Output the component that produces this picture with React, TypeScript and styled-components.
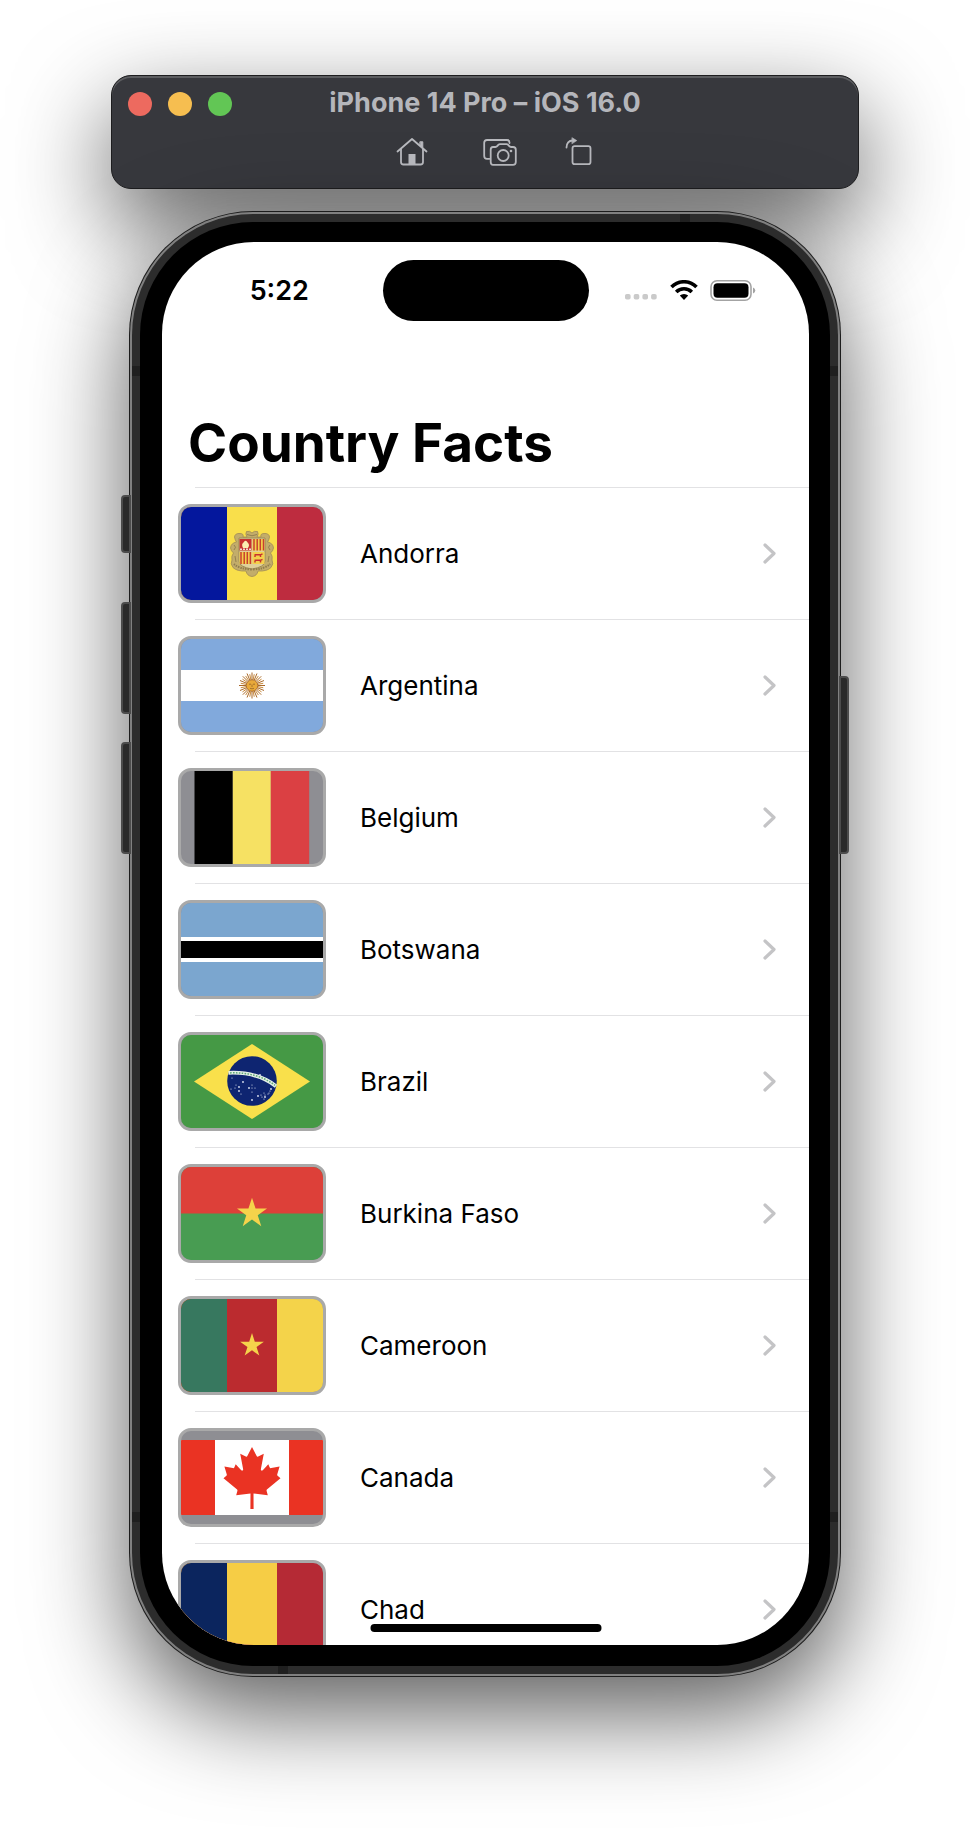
import React from "react";
import styled, { createGlobalStyle } from "styled-components";

const GlobalStyle = createGlobalStyle`
  * { box-sizing: border-box; }
  body {
    margin: 0;
    background: #fff;
    font-family: Inter, "Liberation Sans", sans-serif;
  }
`;

const windowShadow = "0 36px 96px rgba(0, 0, 0, 0.64)";

const Desktop = styled.main`
  max-width: 1000px;
  margin: 0 auto;
  padding: 75px 111px 151px;
  overflow: hidden;
`;

const Simulator = styled.div`
  max-width: 748px;
  margin: 0 auto;
  display: flex;
  flex-direction: column;
  gap: 22px;
`;

const TitleBar = styled.header`
  height: 114px;
  padding: 12px 16px 0;
  border: 1px solid #1d1d1f;
  border-radius: 20px;
  background: #37383d;
  box-shadow: inset 0 2px 0 #5c5d60, ${windowShadow};
`;

const TitleRow = styled.div`
  display: grid;
  grid-template-columns: 1fr auto 1fr;
  align-items: center;
  height: 32px;
`;

const Lights = styled.div`
  display: flex;
  gap: 16px;
`;

const Light = styled.button<{ $color: string }>`
  width: 24px;
  height: 24px;
  padding: 0;
  border: 0;
  border-radius: 50%;
  background: ${(p) => p.$color};
`;

const WindowTitle = styled.h1`
  margin: 0;
  padding-bottom: 2px;
  font-size: 27px;
  line-height: 30px;
  font-weight: 700;
  white-space: nowrap;
  color: #b5b6bb;
`;

const Toolbar = styled.nav`
  display: flex;
  justify-content: center;
  gap: 48px;
  margin-top: 17px;
  padding-left: 18px;
`;

const ToolButton = styled.button`
  display: flex;
  padding: 0;
  border: 0;
  background: none;
  color: #b9babf;
`;

const Phone = styled.section`
  position: relative;
  margin: 0 18px;
  padding: 1px;
  border-radius: 124px;
  background: #1c1c1c;
  box-shadow: ${windowShadow};
`;

const Rim = styled.div`
  padding: 2px;
  border-radius: 123px;
  background: #808080;
`;

const Band = styled.div`
  position: relative;
  padding: 8px;
  border-radius: 121px;
  background: #2c2c2c;
`;

const Bezel = styled.div`
  position: relative;
  padding: 20px 21px 21px 22px;
  border-radius: 113px;
  background: #000;
`;

const Screen = styled.div`
  position: relative;
  aspect-ratio: 647 / 1403;
  overflow: hidden;
  border-radius: 92px;
  background: #fff;
`;

const SideKey = styled.span<{ $side: "left" | "right"; $top: number; $height: number }>`
  position: absolute;
  ${(p) => p.$side}: -8px;
  top: ${(p) => p.$top}px;
  width: 10px;
  height: ${(p) => p.$height}px;
  border: 2px solid #4c4c4c;
  border-radius: ${(p) => (p.$side === "left" ? "4px 0 0 4px" : "0 4px 4px 0")};
  background: #2a2a2a;
`;

const AntennaAcross = styled.span<{ $edge: "top" | "bottom" }>`
  position: absolute;
  left: 0;
  right: 0;
  ${(p) => p.$edge}: 152px;
  height: 10px;
  background: #1f1f1f;
`;

const AntennaDown = styled.span<{ $edge: "top" | "bottom" }>`
  position: absolute;
  ${(p) => (p.$edge === "top" ? "top: 0; right: 148px;" : "bottom: 0; left: 146px;")}
  width: 10px;
  height: 8px;
  background: #1f1f1f;
`;

const StatusBar = styled.div`
  display: grid;
  grid-template-columns: 1fr 206px 1fr;
  align-items: center;
  padding-top: 18px;
`;

const Clock = styled.time`
  padding-left: 14px;
  text-align: center;
  font-size: 27px;
  line-height: 32px;
  font-weight: 600;
`;

const Island = styled.div`
  height: 61px;
  border-radius: 31px;
  background: #000;
`;

const StatusIcons = styled.div`
  display: flex;
  align-items: center;
  justify-content: flex-end;
  gap: 11px;
  padding-right: 53px;
`;

const ScreenTitle = styled.h2`
  margin: 90px 0 0 26px;
  font-size: 53px;
  line-height: 64px;
  font-weight: 700;
`;

const CountryList = styled.ul`
  margin: 12px 0 0;
  padding: 0;
  list-style: none;
`;

const CountryItem = styled.li`
  position: relative;
  height: 132px;

  &::before {
    content: "";
    position: absolute;
    top: 0;
    left: 33px;
    right: 0;
    height: 1px;
    background: #e2e2e4;
  }
`;

const CountryLink = styled.a`
  display: flex;
  align-items: center;
  height: 100%;
  padding: 0 33px 0 16px;
  color: #000;
  text-decoration: none;
`;

const FlagFrame = styled.span`
  display: block;
  flex: none;
  width: 148px;
  height: 99px;
  border: 3px solid #a9a9a9;
  border-radius: 13px;
  overflow: hidden;
  background: #8e8e93;

  svg {
    display: block;
    width: 100%;
    height: 100%;
  }
`;

const CountryName = styled.span`
  flex: 1;
  margin-left: 34px;
  padding-top: 2px;
  font-size: 26px;
  line-height: 32px;
  white-space: nowrap;
`;

const HomeIndicator = styled.div`
  position: absolute;
  left: 50%;
  bottom: 13px;
  width: 231px;
  height: 8px;
  border-radius: 4px;
  background: #000;
  transform: translateX(-50%);
`;

const HomeIcon = () => (
  <svg width="32" height="30" viewBox="0 0 32 30" fill="none" stroke="currentColor" strokeWidth="1.8" strokeLinecap="round" strokeLinejoin="round" aria-hidden="true">
    <path d="M1.5 14.5 L16 2 L30.5 14.5" />
    <path d="M5 12 V25 Q5 27.5 7.5 27.5 H24.500 Q27 27.500 27 25 V12" />
    <path d="M24.200 4.800 H26.800 V10.800 L24.200 8.800 Z" fill="currentColor" strokeWidth="1" />
    <rect x="12.500" y="17" width="7" height="10" fill="currentColor" stroke="none" />
  </svg>
);

const CameraIcon = () => (
  <svg width="41" height="30" viewBox="-7 0 41 30" fill="none" stroke="currentColor" strokeWidth="1.8" strokeLinejoin="round" strokeLinecap="round" aria-hidden="true">
    <path d="M26.500 6 V5.500 Q26.500 3 24 3 H4 Q1.200 3 1.200 5.800 V19 Q1.200 21.800 4 21.800 H6.500" />
    <path d="M10 10 H12.500 Q13.500 10 14.200 9.200 L15.300 7.900 Q16 7.200 17 7.200 H23.500 Q24.500 7.200 25.200 7.900 L26.300 9.200 Q27 10 28 10 H30 Q32.800 10 32.800 12.800 V25 Q32.800 27.800 30 27.800 H10 Q7.700 27.800 7.700 25 V12.800 Q7.700 10 10 10 Z" />
    <circle cx="20.200" cy="18.500" r="5.500" />
    <circle cx="28" cy="14" r="1.300" fill="currentColor" stroke="none" />
  </svg>
);

const RotateIcon = () => (
  <svg width="28" height="30" viewBox="0 0 28 30" fill="none" stroke="currentColor" strokeWidth="1.8" strokeLinecap="round" strokeLinejoin="round" aria-hidden="true">
    <rect x="7.500" y="9.200" width="18" height="18" rx="2.200" />
    <path d="M1.500 10.500 C1.500 6 4 3.500 7.500 3.500" />
    <path d="M7.200 0.800 L11.800 3.600 L7.200 6.600 Z" fill="currentColor" strokeWidth="0.600" />
  </svg>
);

const SignalIcon = () => (
  <svg width="34" height="22" viewBox="0 0 34 22" fill="#cacaca" aria-hidden="true">
    {[0, 1, 2, 3].map((i) => (
      <rect key={i} x={1 + i * 8.7} y="14" width="5.600" height="5.600" rx="1.800" />
    ))}
  </svg>
);

const WifiIcon = () => (
  <svg width="30" height="22" viewBox="0 0 30 22" fill="none" stroke="#000" strokeWidth="3.600" aria-hidden="true">
    <path d="M2.500 7 A17.500 17.500 0 0 1 27.500 7" />
    <path d="M7.200 12 A11 11 0 0 1 22.800 12" />
    <path d="M10.800 15.600 A6 6 0 0 1 19.200 15.600 L15 20 Z" fill="#000" stroke="none" />
  </svg>
);

const BatteryIcon = () => (
  <svg width="46" height="22" viewBox="0 0 46 22" aria-hidden="true">
    <rect x="1" y="0.800" width="40" height="19.500" rx="6" fill="none" stroke="#a3a3a3" strokeWidth="1.600" />
    <rect x="3.500" y="3.300" width="35" height="14.500" rx="4" fill="#000" />
    <path d="M43 7.500 Q45.300 8.300 45.300 10.500 Q45.300 12.700 43 13.500 Z" fill="#a3a3a3" />
  </svg>
);

const Chevron = () => (
  <svg width="14" height="22" viewBox="0 0 14 22" fill="none" stroke="#c4c4c6" strokeWidth="3.200" strokeLinecap="round" strokeLinejoin="round" aria-hidden="true">
    <path d="M3 3 L12 11.500 L3 20" />
  </svg>
);

const starPoints = (cx: number, cy: number, r: number) =>
  Array.from({ length: 10 }, (_, i) => {
    const radius = i % 2 === 0 ? r : r * 0.382;
    const angle = (Math.PI / 5) * i - Math.PI / 2;
    return `${cx + radius * Math.cos(angle)},${cy + radius * Math.sin(angle)}`;
  }).join(" ");

const Tricolor = ({ colors, split = [46, 96] }: { colors: string[]; split?: number[] }) => (
  <>
    <rect width="142" height="93" fill={colors[2]} />
    <rect width={split[1]} height="93" fill={colors[1]} />
    <rect width={split[0]} height="93" fill={colors[0]} />
  </>
);

const AndorraArms = () => (
  <g>
    <path
      d="M71 26 Q73 23.500 76.500 24.500 Q78 27 76 30 H80 Q79 26.500 83 26.500 Q88 26 88.500 30 Q88 33 86.500 35 Q92 36 92.500 41 Q92 44 89.500 46 Q92 49 91 53 Q93 57 90 60.500 Q86 64.500 77 64 Q76 69 71 69.500 Q66 69 65 64 Q56 64.500 52 60.500 Q49 57 51 53 Q50 49 52.500 46 Q50 44 49.500 41 Q50 36 55.500 35 Q54 33 53.500 30 Q54 26 59 26.500 Q63 26.500 62 30 H66 Q64 27 65.500 24.500 Q69 23.500 71 26 Z"
      fill="#c3ad6a"
      stroke="#a08c58"
      strokeWidth="0.800"
    />
    <path d="M58 31 H84 V54 Q84 60 71 62 Q58 60 58 54 Z" fill="#dfd09a" stroke="#9c8a58" />
    <rect x="58.500" y="32" width="12" height="11.500" fill="#c8322f" />
    <path d="M62 41 Q60 37 62.500 35.500 Q64.500 32 67 36 Q69 38 67 41 Z" fill="#fbeeb0" />
    <path d="M59 42.200 H70" stroke="#f3d9cf" strokeWidth="1.400" strokeDasharray="2 1" />
    <rect x="71.500" y="32" width="12" height="11.500" fill="#f3d04c" />
    <path d="M73 32 V43.500 M76.200 32 V43.500 M79.300 32 V43.500 M82.500 32 V43.500" stroke="#c8402f" strokeWidth="1.500" />
    <rect x="58.500" y="45" width="12" height="12" fill="#f3d04c" />
    <path d="M60 45 V57 M63.200 45 V57 M66.300 45 V57 M69.400 45 V57" stroke="#c8402f" strokeWidth="1.500" />
    <rect x="71.500" y="45" width="12" height="12" fill="#f3d04c" />
    <path d="M73.500 47.800 H79.500 L81.500 46.800 M74 50 V48.500 M79.500 50 V48.500 M73.500 53.300 H79.500 L81.500 52.300 M74 55.500 V54 M79.500 55.500 V54" stroke="#c8322f" strokeWidth="1.500" fill="none" />
    <path d="M53 57 Q58 62 71 62.500 Q84 62 89 57" fill="none" stroke="#8f7c4e" strokeWidth="2" strokeDasharray="1.500 1" />
    <path d="M53 38 Q56 40 53 43 M89 38 Q86 40 89 43 M54 49 L55 55 M88 49 L87 55 M66 27.500 Q71 30 76 27.500" fill="none" stroke="#8f7c4e" strokeWidth="0.900" />
  </g>
);

const ArgentinaSun = () => (
  <g>
    {Array.from({ length: 32 }, (_, i) => {
      const a = (Math.PI / 16) * i;
      const r = i % 2 ? 11.5 : 13;
      return (
        <line
          key={i}
          x1={71 + 6 * Math.cos(a)}
          y1={46.5 + 6 * Math.sin(a)}
          x2={71 + r * Math.cos(a)}
          y2={46.5 + r * Math.sin(a)}
          stroke={i % 2 ? "#c98a3a" : "#a9692a"}
          strokeWidth="1"
        />
      );
    })}
    <circle cx="71" cy="46.500" r="5.800" fill="#e8a93a" stroke="#a9692a" strokeWidth="1" />
    <path d="M68 45.200 H70 M72 45.200 H74 M71 45.500 V48 M69 49.300 Q71 50.300 73 49.300" stroke="#8a5a22" strokeWidth="0.700" fill="none" />
  </g>
);

const brazilStars = [
  [51, 43], [62, 47], [55, 50], [54, 53], [58, 52], [50, 54], [60, 59], [58, 56], [71, 50], [71, 53], [68, 53],
  [74, 53], [71, 57], [79, 40], [80, 60], [83, 58], [84, 62], [87, 59], [89, 56], [90, 54], [81, 62], [84, 60],
  [77, 61], [88, 58], [83, 64], [71, 65],
];

const BrazilGlobe = () => (
  <g>
    <circle cx="71" cy="46" r="24.800" fill="#0e2571" />
    <path d="M47.500 37.800 Q76 36.500 95 51.200" fill="none" stroke="#e4efe6" strokeWidth="3.800" />
    <path d="M49 37.900 Q76 36.800 94 50.300" fill="none" stroke="#5fa878" strokeWidth="1.500" strokeDasharray="1.600 1.300" />
    {brazilStars.map(([x, y], i) => (
      <circle key={i} cx={x} cy={y} r={i % 3 === 1 ? 0.9 : 0.6} fill="#dfe5f3" />
    ))}
  </g>
);

const MapleLeaf = () => (
  <path
    d="M71 16 L75.800 25.300 Q76.200 26 77.200 25.500 L82.800 22.700 L79.800 38.500 Q80.300 40.500 82 39 L87.300 33.300 L88.700 36.600 Q89.200 37.400 90.300 37.100 L98.600 35.500 L96.200 43.500 Q96 44.500 96.900 45 L99.500 47.300 L86.200 58.200 Q85.200 59 85.700 60.200 L86.800 64.300 L72.500 62.500 L72.600 78 H69.400 L69.500 62.500 L55.200 64.300 L56.300 60.200 Q56.800 59 55.800 58.200 L42.500 47.300 L45.100 45 Q46 44.500 45.800 43.500 L43.400 35.500 L51.700 37.100 Q52.800 37.400 53.300 36.600 L54.700 33.300 L60 39 Q61.700 40.500 62.200 38.500 L59.200 22.700 L64.800 25.500 Q65.800 26 66.200 25.300 Z"
    fill="#ea3323"
  />
);

const flags: { name: string; art: React.ReactNode }[] = [
  {
    name: "Andorra",
    art: (
      <>
        <Tricolor colors={["#04179d", "#f9df4b", "#be2c3f"]} />
        <AndorraArms />
      </>
    ),
  },
  {
    name: "Argentina",
    art: (
      <>
        <rect width="142" height="93" fill="#81a9dc" />
        <rect y="31" width="142" height="31" fill="#fff" />
        <ArgentinaSun />
      </>
    ),
  },
  {
    name: "Belgium",
    art: (
      <>
        <rect x="13.500" width="38.300" height="93" fill="#000" />
        <rect x="51.800" width="38" height="93" fill="#f6e163" />
        <rect x="89.800" width="38.400" height="93" fill="#db4043" />
      </>
    ),
  },
  {
    name: "Botswana",
    art: (
      <>
        <rect width="142" height="93" fill="#7ba6cf" />
        <rect y="34" width="142" height="25" fill="#fff" />
        <rect y="38" width="142" height="17" fill="#000" />
      </>
    ),
  },
  {
    name: "Brazil",
    art: (
      <>
        <rect width="142" height="93" fill="#459945" />
        <path d="M13 46.500 L71 9 L129 46.500 L71 84 Z" fill="#f9e04b" />
        <BrazilGlobe />
      </>
    ),
  },
  {
    name: "Burkina Faso",
    art: (
      <>
        <rect width="142" height="93" fill="#489c52" />
        <rect width="142" height="46.500" fill="#dd4039" />
        <polygon points={starPoints(71, 46.500, 15.800)} fill="#f5d34b" />
      </>
    ),
  },
  {
    name: "Cameroon",
    art: (
      <>
        <Tricolor colors={["#37785f", "#bb2b2f", "#f4d34a"]} />
        <polygon points={starPoints(71, 46.500, 12.500)} fill="#f5d34b" />
      </>
    ),
  },
  {
    name: "Canada",
    art: (
      <>
        <rect y="9" width="142" height="75" fill="#fff" />
        <rect y="9" width="34" height="75" fill="#ea3323" />
        <rect x="108" y="9" width="34" height="75" fill="#ea3323" />
        <MapleLeaf />
      </>
    ),
  },
  { name: "Chad", art: <Tricolor colors={["#0b255e", "#f6cd45", "#b52a35"]} /> },
];

export default function App() {
  return (
    <>
      <GlobalStyle />
      <Desktop>
        <Simulator>
          <TitleBar>
            <TitleRow>
              <Lights>
                <Light $color="#ed6a5f" aria-label="Close" />
                <Light $color="#f6be50" aria-label="Minimize" />
                <Light $color="#62c655" aria-label="Zoom" />
              </Lights>
              <WindowTitle>iPhone 14 Pro – iOS 16.0</WindowTitle>
            </TitleRow>
            <Toolbar>
              <ToolButton aria-label="Home"><HomeIcon /></ToolButton>
              <ToolButton aria-label="Screenshot"><CameraIcon /></ToolButton>
              <ToolButton aria-label="Rotate"><RotateIcon /></ToolButton>
            </Toolbar>
          </TitleBar>
          <Phone>
            <SideKey $side="left" $top={284} $height={58} />
            <SideKey $side="left" $top={391} $height={112} />
            <SideKey $side="left" $top={531} $height={112} />
            <SideKey $side="right" $top={465} $height={178} />
            <Rim>
              <Band>
                <AntennaAcross $edge="top" />
                <AntennaAcross $edge="bottom" />
                <AntennaDown $edge="top" />
                <AntennaDown $edge="bottom" />
                <Bezel>
                  <Screen>
                    <StatusBar>
                      <Clock>5:22</Clock>
                      <Island />
                      <StatusIcons>
                        <SignalIcon />
                        <WifiIcon />
                        <BatteryIcon />
                      </StatusIcons>
                    </StatusBar>
                    <ScreenTitle>Country Facts</ScreenTitle>
                    <CountryList>
                      {flags.map((flag) => (
                        <CountryItem key={flag.name}>
                          <CountryLink href={`#${flag.name}`}>
                            <FlagFrame>
                              <svg viewBox="0 0 142 93" preserveAspectRatio="none" aria-hidden="true">{flag.art}</svg>
                            </FlagFrame>
                            <CountryName>{flag.name}</CountryName>
                            <Chevron />
                          </CountryLink>
                        </CountryItem>
                      ))}
                    </CountryList>
                    <HomeIndicator />
                  </Screen>
                </Bezel>
              </Band>
            </Rim>
          </Phone>
        </Simulator>
      </Desktop>
    </>
  );
}
